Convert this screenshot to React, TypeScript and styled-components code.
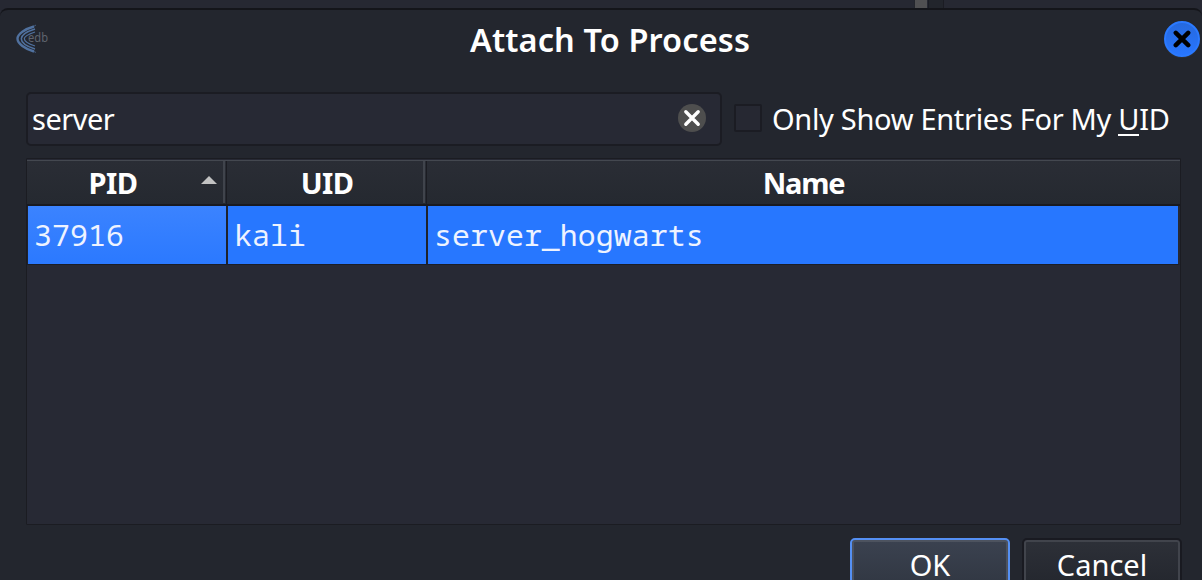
import React from "react";
import styled, { createGlobalStyle } from "styled-components";

const GlobalStyle = createGlobalStyle`
  * { box-sizing: border-box; }
  html, body { margin: 0; padding: 0; background: #262832; overflow: hidden; }
  body { font-family: "Noto Sans", "Open Sans", sans-serif; color: #fff; }
`;

const Screen = styled.div`
  width: 1202px;
  height: 580px;
  overflow: hidden;
  display: flex;
  flex-direction: column;
  background: #262832;
`;

const Backdrop = styled.div`
  height: 8px;
  flex: none;
  display: flex;
  padding-left: 914px;
`;

const ScrollThumb = styled.div`
  width: 13px;
  background: #505052;
  border-left: 1px solid #24262d;
`;

const ScrollGap = styled.div`
  width: 16px;
  margin-left: 1px;
  background: #22252c;
  border-left: 1px solid #1b1c23;
  border-right: 1px solid #1b1c23;
`;

const Dialog = styled.div`
  flex: none;
  height: 600px;
  display: flex;
  flex-direction: column;
  background: #23262e;
  border-top: 2px solid #14151a;
  border-radius: 8px 8px 0 0;
`;

const TitleBar = styled.header`
  height: 58px;
  display: grid;
  grid-template-columns: 56px 1fr 38px;
  align-items: start;
  padding-left: 15px;
`;

const Logo = styled.svg`
  margin-top: 14px;
  display: block;
`;

const TextLine = styled.span<{ $size: number; $weight?: number; $spacing?: number }>`
  font-size: ${(p) => p.$size}px;
  font-weight: ${(p) => p.$weight ?? 400};
  letter-spacing: ${(p) => p.$spacing ?? 0}px;
  line-height: 40px;
  white-space: nowrap;
`;

const Title = styled.h1`
  margin: 10px 0 0 17px;
  width: 1044px;
  text-align: center;
  line-height: 40px;
`;

const CloseButton = styled.button`
  width: 36px;
  height: 36px;
  margin-top: 11px;
  padding: 0;
  border: 2px solid #2b7aff;
  border-radius: 50%;
  background: linear-gradient(#2669de, #2876ff);
  display: grid;
  place-items: center;
  box-shadow: 0 1px 1px #2e3036;
`;

const Body = styled.main`
  padding: 24px 20px 0 26px;
  display: flex;
  flex-direction: column;
`;

const FilterRow = styled.div`
  height: 54px;
  display: flex;
`;

const SearchField = styled.div`
  width: 696px;
  height: 54px;
  border: 2px solid #1b1c23;
  border-radius: 5px;
  background: #272934;
  display: flex;
  align-items: center;
  justify-content: space-between;
  padding: 0 14px 0 4px;
`;

const ClearButton = styled.button`
  width: 28px;
  height: 28px;
  padding: 0;
  margin-bottom: 2px;
  border: 0;
  border-radius: 50%;
  background: #4e4e4e;
  display: grid;
  place-items: center;
`;

const CheckLabel = styled.label`
  display: flex;
  align-items: center;
  margin-left: 12px;
`;

const CheckBox = styled.span`
  width: 28px;
  height: 28px;
  margin: 0 10px 2px 0;
  border: 2px solid #1b1c23;
  border-radius: 2px;
  background: #262832;
`;

const Mnemonic = styled.span`
  display: inline-block;
  line-height: 31px;
  height: 31px;
  box-shadow: 0 2px 0 #fff;
`;

const Table = styled.section`
  height: 367px;
  margin-top: 12px;
  border: 1px solid #1b1c22;
  background: #272934;
  border-radius: 1px;
  width: 1155px;
`;

const HeaderRow = styled.div`
  display: grid;
  grid-template-columns: 200px 200px 1fr;
  height: 47px;
  padding-top: 1px;
  border-bottom: 2px solid #191a20;
`;

const HeaderCell = styled.div<{ $last?: boolean; $shift?: number }>`
  position: relative;
  display: flex;
  align-items: center;
  justify-content: center;
  padding-right: ${(p) => p.$shift ?? 0}px;
  border-top: 1px solid #444850;
  background:
    linear-gradient(#40444c, #40444c) ${(p) => (p.$last ? "-9px" : "196px")} 0 / 2px 42px no-repeat,
    linear-gradient(#1b1c22, #1b1c22) ${(p) => (p.$last ? "-9px" : "199px")} 0 / 1px 100% no-repeat,
    linear-gradient(#2a2d35, #252930);
`;

const SortArrow = styled.span`
  position: absolute;
  right: 10px;
  top: 15px;
  border-left: 8px solid transparent;
  border-right: 8px solid transparent;
  border-bottom: 8px solid #c2c2c2;
`;

const DataRow = styled.div`
  display: grid;
  grid-template-columns: 198px 198px 750px;
  column-gap: 2px;
  height: 59px;
  width: 1153px;
  padding-left: 1px;
  background: #1e222b;
  border-right: 2px solid #272934;
  border-bottom: 1px solid #1b1e27;
`;

const Cell = styled.div<{ $focus?: boolean }>`
  display: flex;
  align-items: center;
  padding-left: 6px;
  padding-bottom: 1px;
  height: 58px;
  background: ${(p) => (p.$focus ? "linear-gradient(#3b83ff, #2b79ff)" : "#2777ff")};
  color: #eef3ff;
  font-family: "Noto Sans Mono", "DejaVu Sans Mono", monospace;
  font-size: 29.8px;
  letter-spacing: 0.1px;
  white-space: pre;
`;

const Actions = styled.footer`
  display: flex;
  justify-content: flex-end;
  gap: 12px;
  margin-top: 13px;
`;

const ActionButton = styled.button<{ $primary?: boolean }>`
  width: 160px;
  height: 54px;
  padding: 0;
  border: 2px solid ${(p) => (p.$primary ? "#5590f4" : "#191a21")};
  border-radius: 5px;
  background: ${(p) => (p.$primary ? "linear-gradient(#3b4250, #303641)" : "linear-gradient(#2d3038, #23262d)")};
  box-shadow: inset 0 0 0 2px ${(p) => (p.$primary ? "#4d535f" : "#41444c")};
  color: #fff;
  font-family: inherit;
  display: flex;
  align-items: center;
  justify-content: center;
`;

const Cross = ({ size, color, width }: { size: number; color: string; width: number }) => (
  <svg width={size} height={size} viewBox="0 0 16 16" fill="none" stroke={color} strokeWidth={width} strokeLinecap="round">
    <path d="M2.500 2.500 13.500 13.500M13.500 2.500 2.500 13.500" />
  </svg>
);

export default function App() {
  return (
    <Screen>
      <GlobalStyle />
      <Backdrop>
        <ScrollThumb />
        <ScrollGap />
      </Backdrop>
      <Dialog>
        <TitleBar>
          <Logo width="36" height="30" viewBox="0 0 36 30">
            <g fill="none" stroke="#50719f">
              <path strokeWidth="2.400" d="M19 2.500C10 5 2.500 10 2.500 14.800S10 25 19 27.500" />
              <path strokeWidth="1.500" d="M20 5C12 7.500 6.300 11 6.300 14.800S12 22.500 20 25" />
              <path strokeWidth="1.200" d="M20 8C14 10 9.300 12 9.300 14.800S14 20 20 22" />
              <path strokeWidth="0.700" d="M21 1 18 2.900M21 28.500 18 27" />
            </g>
            <text x="13" y="18.200" fontSize="12" fontFamily="Noto Sans, sans-serif" fill="#5f646f" textLength="20" lengthAdjust="spacingAndGlyphs">edb</text>
          </Logo>
          <Title>
            <TextLine $size={32.5} $weight={600} $spacing={0.1}>Attach To Process</TextLine>
          </Title>
          <CloseButton aria-label="Close">
            <Cross size={18} color="#000" width={4} />
          </CloseButton>
        </TitleBar>
        <Body>
          <FilterRow>
            <SearchField>
              <TextLine $size={29} $spacing={-0.5}>server</TextLine>
              <ClearButton aria-label="Clear">
                <Cross size={18} color="#fff" width={3} />
              </ClearButton>
            </SearchField>
            <CheckLabel>
              <CheckBox />
              <TextLine $size={29} $spacing={-0.31}>
                Only Show Entries For My <Mnemonic>U</Mnemonic>ID
              </TextLine>
            </CheckLabel>
          </FilterRow>
          <Table>
            <HeaderRow>
              <HeaderCell $shift={28}>
                <TextLine $size={29} $weight={700} $spacing={-0.5}>PID</TextLine>
                <SortArrow />
              </HeaderCell>
              <HeaderCell>
                <TextLine $size={29} $weight={700} $spacing={-0.7}>UID</TextLine>
              </HeaderCell>
              <HeaderCell $last>
                <TextLine $size={29} $weight={700} $spacing={-1.2}>Name</TextLine>
              </HeaderCell>
            </HeaderRow>
            <DataRow>
              <Cell $focus>37916</Cell>
              <Cell>kali</Cell>
              <Cell>server_hogwarts</Cell>
            </DataRow>
          </Table>
          <Actions>
            <ActionButton $primary>
              <TextLine $size={29}>OK</TextLine>
            </ActionButton>
            <ActionButton>
              <TextLine $size={29}>Cancel</TextLine>
            </ActionButton>
          </Actions>
        </Body>
      </Dialog>
    </Screen>
  );
}
